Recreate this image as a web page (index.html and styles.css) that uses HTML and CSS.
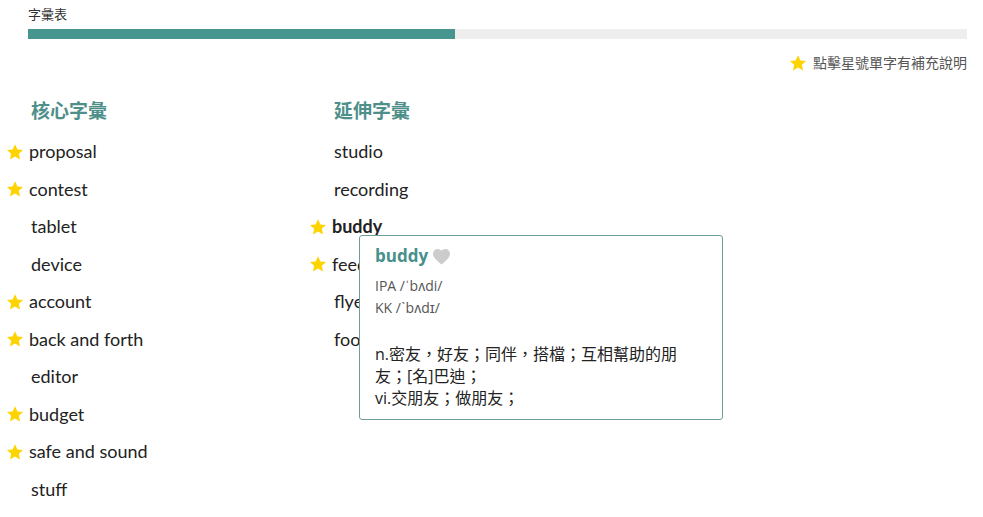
FILE: index.html
```html
<!DOCTYPE html>
<html lang="zh-Hant">
<head>
  <meta charset="UTF-8">
  <meta name="viewport" content="width=device-width, initial-scale=1.0">
  <title>字彙表</title>
  <link rel="stylesheet" href="styles.css">
</head>
<body>
  <svg width="0" height="0" class="defs">
    <symbol id="star" viewBox="0 0 24 24"><path d="M12 1.5l3.2 7 7.6.8-5.7 5.1 1.6 7.5L12 18l-6.7 3.9 1.6-7.5L1.2 9.3l7.6-.8z"/></symbol>
  </svg>
  <div class="page">
    <div class="title">字彙表</div>
    <div class="progress"><div class="progress-fill"></div></div>
    <div class="hint">
      <svg class="star"><use href="#star"/></svg>
      點擊星號單字有補充說明
    </div>

    <div class="columns">
      <div class="column">
        <h2>核心字彙</h2>
        <ul class="words">
          <li class="starred"><svg class="star"><use href="#star"/></svg>proposal</li>
          <li class="starred"><svg class="star"><use href="#star"/></svg>contest</li>
          <li>tablet</li>
          <li>device</li>
          <li class="starred"><svg class="star"><use href="#star"/></svg>account</li>
          <li class="starred"><svg class="star"><use href="#star"/></svg>back and forth</li>
          <li>editor</li>
          <li class="starred"><svg class="star"><use href="#star"/></svg>budget</li>
          <li class="starred"><svg class="star"><use href="#star"/></svg>safe and sound</li>
          <li>stuff</li>
        </ul>
      </div>
      <div class="column">
        <h2>延伸字彙</h2>
        <ul class="words">
          <li>studio</li>
          <li>recording</li>
          <li class="starred active"><svg class="star"><use href="#star"/></svg>buddy
            <div class="popup">
              <div class="popup-head">
                <span class="popup-word">buddy</span>
                <svg class="heart" viewBox="0 0 24 22"><path d="M12 21.5l-1.6-1.4C4.6 15 1 11.7 1 7.4 1 3.9 3.7 1.2 7.1 1.2c1.9 0 3.8.9 4.9 2.4 1.1-1.5 3-2.4 4.9-2.4 3.4 0 6.1 2.7 6.1 6.2 0 4.3-3.6 7.6-9.4 12.7z"/></svg>
              </div>
              <div class="phon">IPA /ˈbʌdi/</div>
              <div class="phon">KK /ˋbʌdɪ/</div>
              <div class="def">n.密友，好友；同伴，搭檔；互相幫助的朋友；[名]巴迪；<br>vi.交朋友；做朋友；</div>
            </div>
          </li>
          <li class="starred"><svg class="star"><use href="#star"/></svg>feedback</li>
          <li>flyer</li>
          <li>food</li>
        </ul>
      </div>
    </div>
  </div>
</body>
</html>
```
FILE: styles.css
```css
body {
  margin: 0;
  font-family: Lato, "Noto Sans CJK TC", sans-serif;
  color: #222;
  background: #fff;
}
.defs {
  position: absolute;
}
.page {
  padding: 5px 16px 0 28px;
}
.title {
  font-size: 13px;
  color: #333;
  line-height: 18px;
}
.progress {
  margin-top: 6px;
  height: 10px;
  background: #eeeeee;
}
.progress-fill {
  width: 45.5%;
  height: 100%;
  background: #47958f;
}
.hint {
  margin-top: 14px;
  display: flex;
  justify-content: flex-end;
  align-items: center;
  gap: 6px;
  font-size: 14px;
  color: #555;
  line-height: 20px;
}
.star {
  width: 18px;
  height: 18px;
  fill: #fdd400;
}
.columns {
  display: flex;
  margin-left: -22px;
  margin-top: 24px;
}
.column {
  width: 303px;
}
h2 {
  margin: 0 0 10px 25px;
  font-size: 19px;
  font-weight: 600;
  color: #4f8f8a;
  line-height: 26px;
  font-family: "Noto Sans CJK TC", sans-serif;
}
.words {
  list-style: none;
  margin: 0;
  padding: 0;
}
.words li {
  position: relative;
  display: flex;
  align-items: center;
  font-size: 18px;
  line-height: 37.5px;
  padding-left: 25px;
}
.words li.starred {
  padding-left: 0;
}
.words li.starred .star {
  margin-right: 5px;
}
.words li.active {
  font-weight: 700;
}
.popup {
  position: absolute;
  left: 50px;
  top: 27px;
  width: 332px;
  padding: 8px 15px 10px;
  border: 1px solid #6f9d9a;
  border-radius: 3px;
  background: #fff;
  font-weight: 400;
  z-index: 2;
}
.popup-head {
  display: flex;
  align-items: center;
  gap: 4px;
  line-height: 24px;
}
.popup-word {
  font-size: 17px;
  font-weight: 700;
  color: #47908b;
  font-family: "Open Sans", sans-serif;
}
.heart {
  width: 19px;
  height: 17px;
  fill: #cccccc;
}
.phon {
  font-size: 14px;
  line-height: 22px;
  color: #555;
  font-family: "Open Sans", sans-serif;
}
.popup-head + .phon {
  margin-top: 7px;
}
.def {
  margin-top: 24px;
  font-size: 16px;
  line-height: 22px;
  color: #222;
  font-family: "Open Sans", "Noto Sans CJK TC", sans-serif;
}
```
